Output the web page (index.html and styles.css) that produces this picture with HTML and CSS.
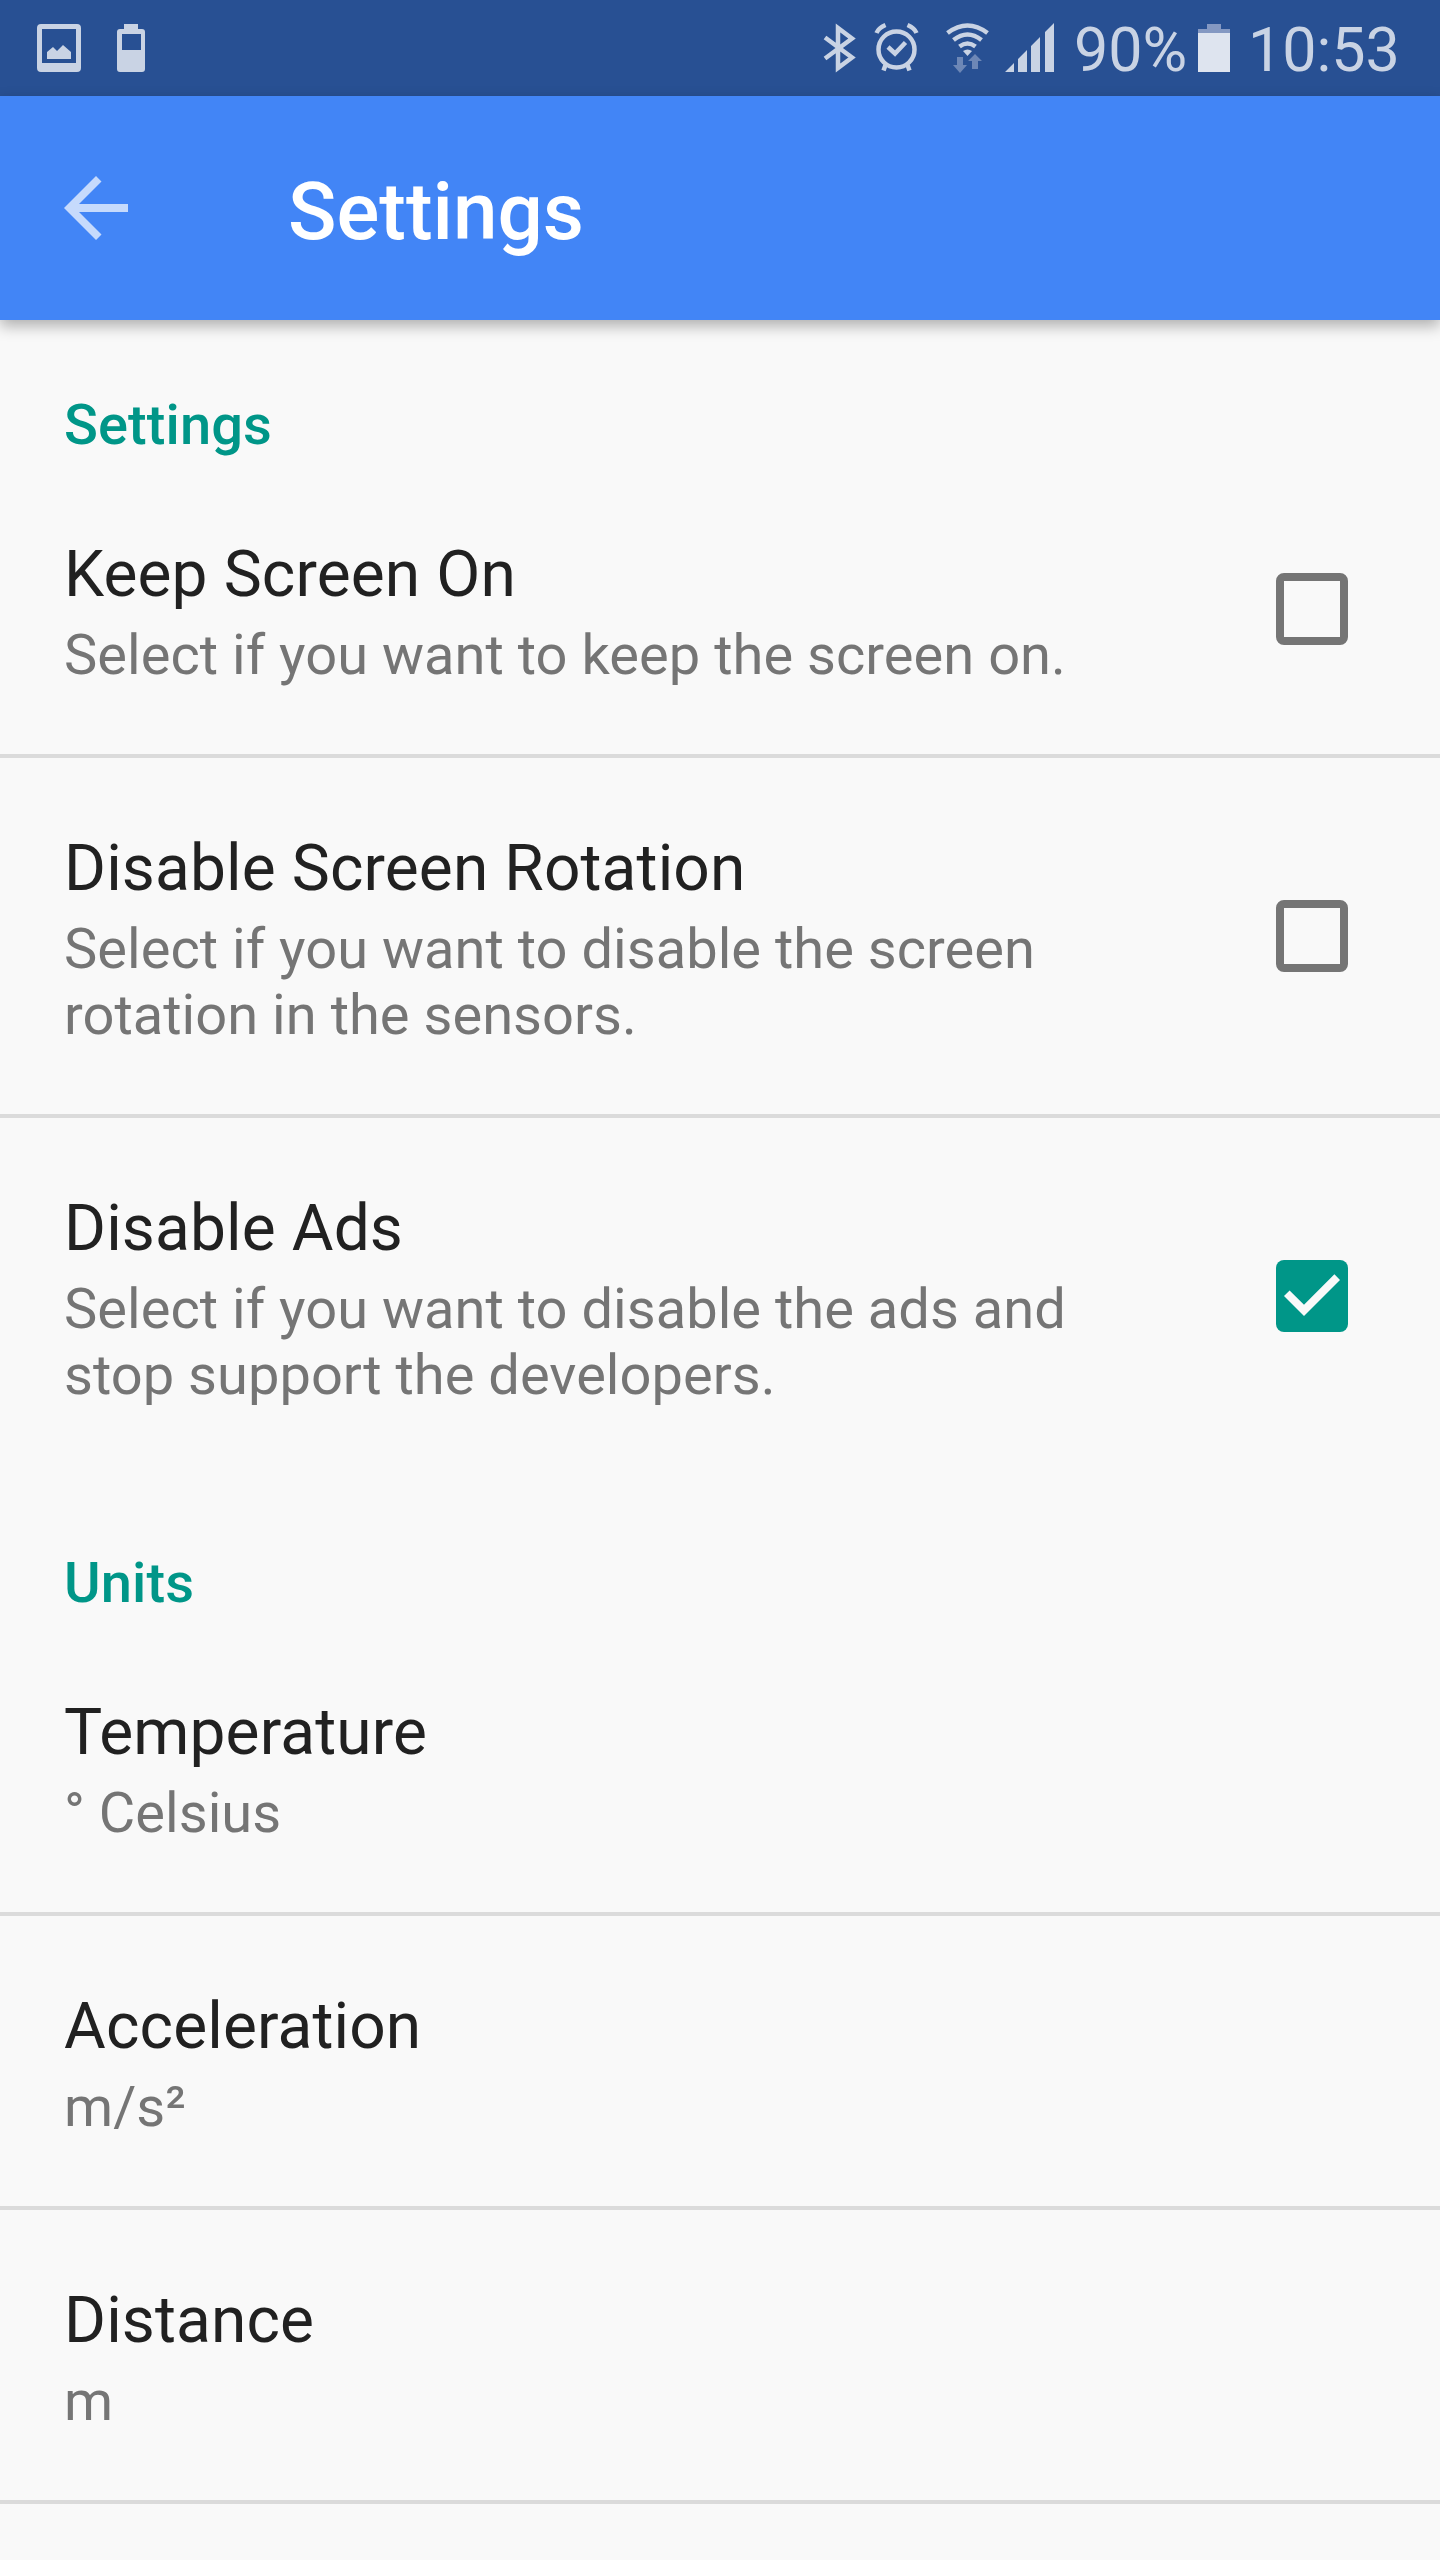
FILE: index.html
```html
<!DOCTYPE html>
<html lang="en">
<head>
  <meta charset="UTF-8">
  <meta name="viewport" content="width=device-width, initial-scale=1.0">
  <title>Settings</title>
  <link rel="stylesheet" href="styles.css">
</head>
<body>

  <div class="status-bar">
    <svg width="160" height="96" viewBox="0 0 160 96">
      <!-- picture -->
      <path fill-rule="evenodd" d="M41 24h36a4 4 0 0 1 4 4v40a4 4 0 0 1-4 4H41a4 4 0 0 1-4-4V28a4 4 0 0 1 4-4zM42 29v34h34V29z"/>
      <path d="M47 59v-7l6-5 4 4 6-6 8 7v7z"/>
      <!-- battery -->
      <path fill-rule="evenodd" d="M124 24h14v5h4a3 3 0 0 1 3 3v37a3 3 0 0 1-3 3h-22a3 3 0 0 1-3-3V32a3 3 0 0 1 3-3h4zM122 34v16h19V34z"/>
    </svg>

    <div class="status-right">
      <svg width="240" height="96" viewBox="820 0 240 96">
        <!-- bluetooth -->
        <path class="line" d="M825 37.500l27 20-14 10.500V28l14 10.500-27 20"/>
        <!-- alarm -->
        <circle class="line" cx="896.500" cy="49.500" r="18"/>
        <path class="line" d="M888 47l7 6.500 10.500-11M885.500 65l-2 5.500M907.500 65l2 5.500M876.500 33q2-5 9-8M916.500 33q-2-5-9-8"/>
        <!-- wifi -->
        <path class="line" d="M947.500 33q20-15 40 0M953.500 40q14-11 28 0M959.500 46.500q8-6 16 0"/>
        <path d="M963 51q4.500-3 9 0l-4.500 5z"/>
        <path class="faded" d="M957 57h6v8h4l-7 8-7-8h4zM972 69V61h-4l7-7 7 7h-4v8z"/>
        <!-- signal -->
        <path d="M1005 72l9-9v9zM1018 72V59l9-9v22zM1031 72V46l9-9v35zM1045 72V32l9-9v49z"/>
      </svg>
      <span class="battery-level">90%</span>
      <svg width="32" height="96" viewBox="0 0 32 96">
        <path class="battery-cap" d="M9 24h14v5h9v4H0v-4h9z"/>
        <path class="battery-fill" d="M0 33h32v39H0z"/>
      </svg>
      <span class="clock">10:53</span>
    </div>
  </div>

  <header class="toolbar">
    <svg class="back" width="64" height="64" viewBox="0 0 64 64">
      <path d="M64 28H15l22.500-22.500L32 0 0 32l32 32 5.500-5.500L15 36h49z"/>
    </svg>
    <h1>Settings</h1>
  </header>

  <main>
    <h2>Settings</h2>
    <label class="item">
      <span class="text">
        <span class="title">Keep Screen On</span>
        <span class="summary">Select if you want to keep the screen on.</span>
      </span>
      <input class="checkbox" type="checkbox">
    </label>
    <label class="item">
      <span class="text">
        <span class="title">Disable Screen Rotation</span>
        <span class="summary">Select if you want to disable the screen rotation in the sensors.</span>
      </span>
      <input class="checkbox" type="checkbox">
    </label>
    <label class="item">
      <span class="text">
        <span class="title">Disable Ads</span>
        <span class="summary">Select if you want to disable the ads and stop support the developers.</span>
      </span>
      <svg class="checkbox-on" width="72" height="72" viewBox="0 0 72 72">
        <rect width="72" height="72" rx="8"/>
        <path d="M8 36l5.600-5.600L28 44.700 58.400 14.300 64 20 28 56z"/>
      </svg>
    </label>

    <h2>Units</h2>
    <div class="item">
      <span class="text">
        <span class="title">Temperature</span>
        <span class="summary">° Celsius</span>
      </span>
    </div>
    <div class="item">
      <span class="text">
        <span class="title">Acceleration</span>
        <span class="summary">m/s²</span>
      </span>
    </div>
    <div class="item">
      <span class="text">
        <span class="title">Distance</span>
        <span class="summary">m</span>
      </span>
    </div>
    <div class="item"></div>
  </main>

</body>
</html>
```

FILE: styles.css
```css
* {
  box-sizing: border-box;
}

body {
  margin: 0;
  height: 2560px;
  overflow: hidden;
  background-color: #f9f9f9;
  font-family: Roboto, sans-serif;
  color: #212121;
}

svg {
  display: block;
  flex: none;
}

/* Status bar */
.status-bar {
  display: flex;
  justify-content: space-between;
  height: 96px;
  background-color: #285093;
  color: #c9d3e4;
  fill: #c9d3e4;
}

.status-right {
  display: flex;
  padding-right: 42px;
  font-size: 61px;
  line-height: 100px;
}

.line {
  fill: none;
  stroke: #c9d3e4;
  stroke-width: 4.5;
}

.faded {
  fill: #6d87b6;
}

.battery-level {
  width: 124px;
  margin-left: 14px;
  white-space: nowrap;
}

.battery-cap {
  fill: #8498c2;
}

.battery-fill {
  fill: #dee4ef;
}

.clock {
  width: 150px;
  margin-left: 18px;
}

/* Toolbar */
.toolbar {
  position: relative;
  display: flex;
  align-items: center;
  height: 224px;
  padding-left: 64px;
  background-color: #4285f6;
  box-shadow: 0 6px 14px rgba(0, 0, 0, 0.3);
}

.back {
  fill: #c6dafc;
}

h1 {
  margin: 8px 0 0 160px;
  font-size: 80px;
  font-weight: 500;
  line-height: 94px;
  color: #fff;
}

/* Preferences */
h2 {
  margin: 0;
  height: 144px;
  padding: 72px 64px 0;
  font-size: 56px;
  font-weight: 500;
  line-height: 66px;
  letter-spacing: 0.1px;
  color: #009688;
}

.item {
  display: flex;
  align-items: center;
  justify-content: space-between;
  padding: 73px 92px 66px 64px;
}

.item + .item {
  border-top: 4px solid #dbdbdb;
}

.item + h2 {
  margin-top: 4px;
}

.text {
  width: 1030px;
}

.title, .summary {
  display: block;
}

.title {
  font-size: 64px;
  line-height: 76px;
  letter-spacing: 0.13px;
}

.summary {
  margin-top: 9px;
  font-size: 56px;
  line-height: 66px;
  letter-spacing: 0.03px;
  color: #757575;
}

.checkbox, .checkbox-on {
  width: 72px;
  height: 72px;
  margin: 0 0 7px;
}

.checkbox {
  appearance: none;
  border: 8px solid #757575;
  border-radius: 8px;
}

.checkbox-on {
  fill: #009688;
}

.checkbox-on path {
  fill: #f9f9f9;
}
```
